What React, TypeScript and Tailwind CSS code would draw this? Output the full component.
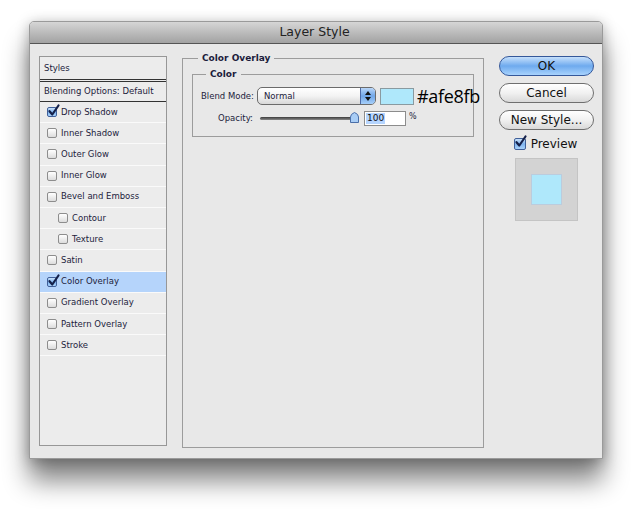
import React from "react";

const UI = "font-['DejaVu_Sans',_sans-serif]";

const styleRows = [
  { label: "Drop Shadow", checked: true },
  { label: "Inner Shadow" },
  { label: "Outer Glow" },
  { label: "Inner Glow" },
  { label: "Bevel and Emboss" },
  { label: "Contour", indent: true },
  { label: "Texture", indent: true },
  { label: "Satin" },
  { label: "Color Overlay", checked: true, selected: true },
  { label: "Gradient Overlay" },
  { label: "Pattern Overlay" },
  { label: "Stroke" },
];

function CheckBox({ checked, big }: { checked?: boolean; big?: boolean }) {
  const size = big ? "w-[12px] h-[12px]" : "w-[10px] h-[10px]";
  return (
    <span className={`relative inline-block shrink-0 ${size}`}>
      <span
        className={`absolute inset-0 rounded-[2px] border ${
          checked
            ? "border-[#3f5f99] bg-gradient-to-b from-[#c9e1fa] via-[#7eb3ee] to-[#a9d2fb]"
            : "border-[#8d8d8d] bg-gradient-to-b from-[#ffffff] to-[#dcdcdc]"
        }`}
      />
      {checked && (
        <svg
          viewBox="0 0 12 12"
          className="absolute left-[1px] top-[-2px] w-[12px] h-[12px] overflow-visible"
        >
          <path
            d="M1.5 6.2 L4.3 9.5 L10.5 0.5"
            fill="none"
            stroke="#14204a"
            strokeWidth="2.2"
            strokeLinecap="round"
            strokeLinejoin="round"
          />
        </svg>
      )}
    </span>
  );
}

function PillButton({ label, primary }: { label: string; primary?: boolean }) {
  return (
    <div
      className={`h-[20px] w-[95px] rounded-full border flex items-center justify-center text-[12px] text-[#111] ${
        primary
          ? "border-[#35589a] bg-gradient-to-b from-[#c6e0fb] via-[#6eaaee] to-[#a8d3fd]"
          : "border-[#6f6f6f] bg-gradient-to-b from-[#ffffff] via-[#f1f1f1] to-[#d9d9d9]"
      }`}
    >
      {label}
    </div>
  );
}

export default function App() {
  return (
    <div className={`w-[640px] h-[513px] bg-white pt-[21px] pl-[29px] ${UI}`}>
      <div className="w-[574px] h-[438px] bg-[#e8e8e8] border border-[#9a9a9a] rounded-t-[5px] shadow-[0_22px_26px_rgba(0,0,0,0.48),0_2px_14px_rgba(0,0,0,0.28)] flex flex-col">
        {/* Title bar */}
        <div className="h-[22px] rounded-t-[4px] bg-gradient-to-b from-[#d6d6d6] to-[#a2a2a2] border-b border-[#555] flex items-center justify-center">
          <span className="text-[12.5px] text-[#222] pr-[3px]">Layer Style</span>
        </div>

        <div className="flex flex-1 pl-[9px] pt-[12px]">
          {/* Styles list */}
          <div className="w-[128px] h-[390px] shrink-0 border border-[#979797] bg-[#ececec] text-[8.5px] text-[#1c1c3c]">
            <div className="h-[22px] flex items-center pl-[4px]">Styles</div>
            <div className="h-[3px] border-y border-[#333]" />
            <div className="h-[20px] flex items-center pl-[4px] border-b border-[#333]">
              Blending Options: Default
            </div>
            {styleRows.map((row) => (
              <div
                key={row.label}
                className={`h-[21.2px] flex items-center gap-[4px] border-b border-[#fafafa] ${
                  row.indent ? "pl-[18px]" : "pl-[7px]"
                } ${row.selected ? "bg-[#b5d4fb]" : ""}`}
              >
                <CheckBox checked={row.checked} />
                <span>{row.label}</span>
              </div>
            ))}
          </div>

          {/* Color Overlay panel */}
          <div className="ml-[15px] mt-[2px] w-[302px] h-[390px] shrink-0 relative border border-[#9c9c9c]">
            <span className="absolute left-[15px] top-[-7px] px-[4px] bg-[#e8e8e8] text-[9px] font-bold text-[#1c1c3c]">
              Color Overlay
            </span>
            <div className="mt-[15px] mx-[9px] h-[63px] relative border border-[#9c9c9c]">
              <span className="absolute left-[13px] top-[-7px] px-[4px] bg-[#e8e8e8] text-[9px] font-bold text-[#1c1c3c]">
                Color
              </span>
              <div className="pt-[12px] pl-[8px] flex items-center whitespace-nowrap text-[8.5px] text-[#1c1c3c]">
                <span className="w-[56px] shrink-0">Blend Mode:</span>
                <div className="w-[119px] h-[18px] shrink-0 rounded-[5px] border border-[#6b6b6b] bg-gradient-to-b from-[#ffffff] via-[#f3f3f3] to-[#d8d8d8] flex overflow-hidden">
                  <span className="flex-1 pl-[6px] flex items-center">Normal</span>
                  <span className="w-[15px] border-l border-[#4d6aa6] bg-gradient-to-b from-[#b9d6f8] via-[#6fa6e8] to-[#a6cffa] flex flex-col items-center justify-center gap-[2px]">
                    <svg viewBox="0 0 6 4" className="w-[6px] h-[4px]">
                      <path d="M0 4 L3 0 L6 4 Z" fill="#111" />
                    </svg>
                    <svg viewBox="0 0 6 4" className="w-[6px] h-[4px]">
                      <path d="M0 0 L3 4 L6 0 Z" fill="#111" />
                    </svg>
                  </span>
                </div>
                <span className="ml-[4px] w-[34px] h-[17px] shrink-0 bg-[#afe8fb] border border-[#8a9aa0]" />
                <span className="ml-[3px] shrink-0 text-[18px] leading-none text-black font-['Open_Sans',_sans-serif] tracking-[-0.3px]">
                  #afe8fb
                </span>
              </div>
              <div className="mt-[6px] pl-[25px] flex items-center whitespace-nowrap text-[8.5px] text-[#1c1c3c]">
                <span className="w-[42px] shrink-0">Opacity:</span>
                <div className="relative w-[99px] h-[10px] shrink-0 flex items-center">
                  <div className="w-[95px] h-[3px] rounded-full bg-gradient-to-b from-[#3c3c3c] to-[#8a8a8a]" />
                  <svg viewBox="0 0 9 11" className="absolute left-[90px] top-[-2px] w-[9px] h-[11px]">
                    <path
                      d="M0.5 10.5 L0.5 5 Q0.5 2 4.5 0.5 Q8.5 2 8.5 5 L8.5 10.5 Z"
                      fill="#a9cdf5"
                      stroke="#4b6fa8"
                      strokeWidth="1"
                    />
                  </svg>
                </div>
                <div className="ml-[5px] w-[42px] h-[15px] shrink-0 bg-white border border-[#8c8c8c] flex items-center pl-[1px]">
                  <span className="bg-[#b5d5ff] text-[9px] text-[#111] px-[1px] leading-[11px]">100</span>
                </div>
                <span className="ml-[3px] -mt-[4px] text-[8px]">%</span>
              </div>
            </div>
          </div>

          {/* Right column */}
          <div className="ml-[15px] flex flex-col items-center w-[95px] shrink-0">
            <PillButton label="OK" primary />
            <div className="h-[7px]" />
            <PillButton label="Cancel" />
            <div className="h-[7px]" />
            <PillButton label="New Style..." />
            <div className="mt-[7px] h-[14px] flex items-center gap-[5px] text-[12px] text-[#111] pr-[2px]">
              <CheckBox checked big />
              <span>Preview</span>
            </div>
            <div className="mt-[7px] w-[63px] h-[63px] bg-[#d3d3d3] border border-[#c4c4c4] flex items-center justify-center">
              <div className="w-[31px] h-[31px] bg-[#afe8fb] border border-[#bcd]" />
            </div>
          </div>
        </div>
      </div>
    </div>
  );
}
